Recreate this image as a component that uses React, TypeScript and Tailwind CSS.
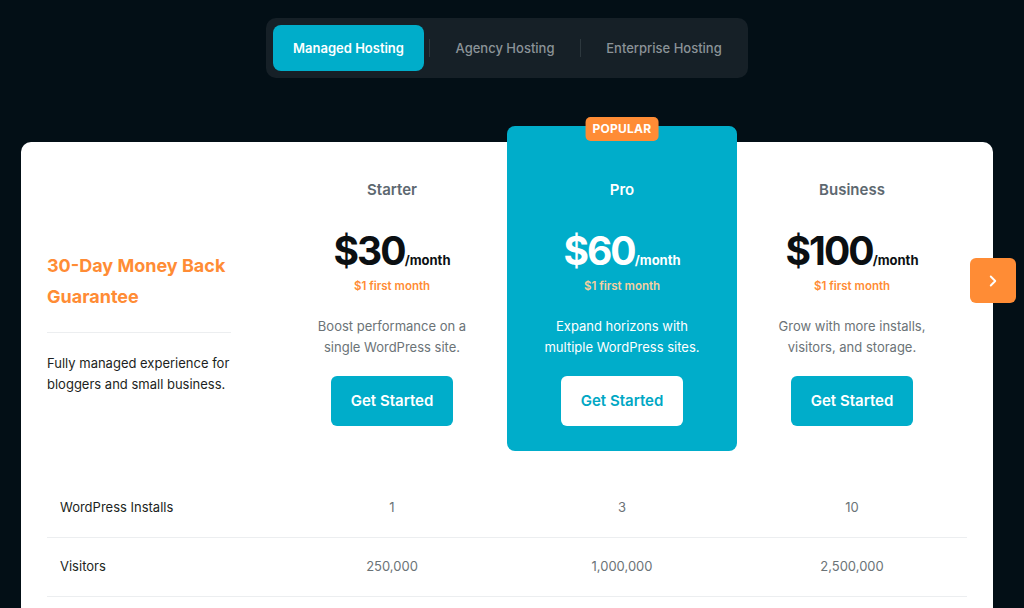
import { ChevronRight } from "lucide-react";

const plans = [
  { name: "Starter", price: "$30", desc: ["Boost performance on a", "single WordPress site."], featured: false },
  { name: "Pro", price: "$60", desc: ["Expand horizons with", "multiple WordPress sites."], featured: true },
  { name: "Business", price: "$100", desc: ["Grow with more installs,", "visitors, and storage."], featured: false },
];

const rows = [
  { label: "WordPress Installs", values: ["1", "3", "10"] },
  { label: "Visitors", values: ["250,000", "1,000,000", "2,500,000"] },
];

const tabs = ["Managed Hosting", "Agency Hosting", "Enterprise Hosting"];

const PlanColumn = ({ plan }: { plan: (typeof plans)[number] }) => {
  const f = plan.featured;
  return (
    <div
      className={
        f
          ? "relative -mt-[16px] flex flex-col items-center rounded-[8px] bg-[#00adca] pt-[53px] pb-[25px]"
          : "flex flex-col items-center pt-[37px]"
      }
    >
      {f && (
        <span className="absolute -top-[9px] left-1/2 -translate-x-1/2 rounded-[5px] bg-[#ff8c35] px-[7px] text-[12px] leading-[24px] font-bold tracking-[0.02em] text-white">
          POPULAR
        </span>
      )}
      <div className={`text-[15px] leading-[22px] font-semibold ${f ? "text-white" : "text-[#5d6870]"}`}>{plan.name}</div>
      <div className={`mt-[27px] flex items-baseline ${f ? "text-white" : "text-[#0b0f12]"}`}>
        <span className="text-[39px] leading-[46px] font-bold tracking-[-0.05em]">{plan.price}</span>
        <span className="text-[13px] font-bold">/month</span>
      </div>
      <div className={`mt-[3px] text-[11.5px] leading-[18px] font-semibold ${f ? "text-[#f8cf9f]" : "text-[#ff8c35]"}`}>
        $1 first month
      </div>
      <div className={`mt-[21px] text-center text-[13px] leading-[21px] ${f ? "text-white" : "text-[#6b7377]"}`}>
        <div>{plan.desc[0]}</div>
        <div>{plan.desc[1]}</div>
      </div>
      <button
        className={`mt-[18px] h-[50px] w-[122px] shrink-0 rounded-[6px] text-[15px] font-semibold ${
          f ? "bg-white text-[#00a7c4]" : "bg-[#00adca] text-white"
        }`}
      >
        Get Started
      </button>
    </div>
  );
};

export default function App() {
  return (
    <div className="min-h-[608px] overflow-hidden bg-[#030f16] font-['Inter',sans-serif]">
      <div className="flex w-[1014px] flex-col items-center pt-[18px]">
        {/* hosting type tabs */}
        <div className="flex h-[60px] items-center rounded-[10px] bg-[#162027] p-[7px]">
          <button className="h-[46px] w-[151px] rounded-[8px] bg-[#00adca] pt-[2px] text-[13px] font-semibold text-white">
            {tabs[0]}
          </button>
          <span className="ml-[5px] h-[18px] w-px bg-[#2d383e]" />
          <button className="h-[46px] w-[150px] pt-[2px] text-[13px] font-medium text-[#8b9398]">{tabs[1]}</button>
          <span className="h-[18px] w-px bg-[#2d383e]" />
          <button className="h-[46px] w-[160px] pt-[2px] pl-[6px] text-[13px] font-medium text-[#8b9398]">{tabs[2]}</button>
        </div>

        {/* pricing card */}
        <div className="relative mt-[64px] w-[972px] rounded-[10px] bg-white px-[26px] pb-[40px]">
          <div className="grid grid-cols-4">
            <div className="pt-[108px]">
              <div className="w-[200px] text-[18px] leading-[31px] font-bold text-[#ff8c35]">30-Day Money Back Guarantee</div>
              <div className="mt-[20px] h-px w-[184px] bg-[#eceef0]" />
              <div className="mt-[20px] w-[200px] text-[13px] leading-[21px] text-[#1c1f22]">
                Fully managed experience for bloggers and small business.
              </div>
            </div>
            {plans.map((p) => (
              <PlanColumn key={p.name} plan={p} />
            ))}
          </div>

          <div className="mt-[28px]">
            {rows.map((r) => (
              <div key={r.label} className="grid h-[59px] grid-cols-4 items-center border-b border-[#eceef0] text-[13px]">
                <div className="pl-[13px] text-[#1c1f22]">{r.label}</div>
                {r.values.map((v, i) => (
                  <div key={i} className="text-center text-[#6b7377]">
                    {v}
                  </div>
                ))}
              </div>
            ))}
          </div>

          <button className="absolute top-[116px] -right-[23px] flex h-[45px] w-[46px] items-center justify-center rounded-[6px] bg-[#ff8c35] text-white">
            <ChevronRight className="h-[18px] w-[18px]" strokeWidth={2.5} />
          </button>
        </div>
      </div>
    </div>
  );
}
